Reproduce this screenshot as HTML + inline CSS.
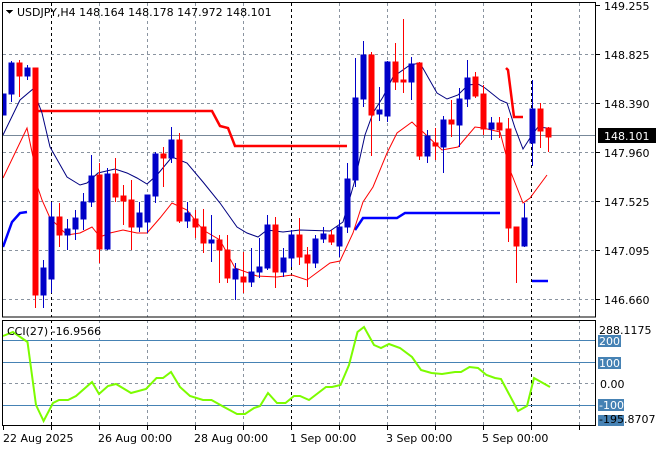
<!DOCTYPE html>
<html><head><meta charset="utf-8"><style>
html,body{margin:0;padding:0;background:#fff;}
svg{display:block;font-family:"DejaVu Sans","Liberation Sans",sans-serif;}
</style></head><body>
<svg width="660" height="450" viewBox="0 0 660 450" xmlns="http://www.w3.org/2000/svg" shape-rendering="crispEdges">
<rect width="660" height="450" fill="#fff"/>
<!-- main grid -->
<g stroke="#8a94a0" stroke-dasharray="3,3" stroke-width="1">
<line x1="3" y1="54.5" x2="596" y2="54.5"/><line x1="3" y1="103.5" x2="596" y2="103.5"/><line x1="3" y1="152.5" x2="596" y2="152.5"/><line x1="3" y1="201.5" x2="596" y2="201.5"/><line x1="3" y1="250.5" x2="596" y2="250.5"/><line x1="3" y1="299.5" x2="596" y2="299.5"/>
<line x1="99.5" y1="3" x2="99.5" y2="317"/><line x1="147.5" y1="3" x2="147.5" y2="317"/><line x1="195.5" y1="3" x2="195.5" y2="317"/><line x1="243.5" y1="3" x2="243.5" y2="317"/><line x1="339.5" y1="3" x2="339.5" y2="317"/><line x1="387.5" y1="3" x2="387.5" y2="317"/><line x1="435.5" y1="3" x2="435.5" y2="317"/><line x1="483.5" y1="3" x2="483.5" y2="317"/><line x1="579.5" y1="3" x2="579.5" y2="317"/>
</g>
<g stroke="#000" stroke-dasharray="3,3">
<line x1="51.5" y1="3" x2="51.5" y2="317"/><line x1="291.5" y1="3" x2="291.5" y2="317"/><line x1="531.5" y1="3" x2="531.5" y2="317"/>
</g>
<line x1="3" y1="135.5" x2="596" y2="135.5" stroke="#778899"/>
<!-- thick lines -->
<g fill="none" stroke-width="2.5" shape-rendering="auto">
<polyline stroke="#ff0000" points="37,111 212,111 220,126 228,128 235,146 347,146"/>
<polyline stroke="#ff0000" points="506,68 508,70 514,117 523,117"/>
<polyline stroke="#0000ff" points="3,247 12,222 20,213 27,212"/>
<polyline stroke="#0000ff" points="355,230 363,218 397,218 405,213 500,213"/>
<polyline stroke="#0000ff" points="532,281 548,281"/>
</g>
<g fill="none" stroke-width="1" shape-rendering="auto">
<polyline stroke="#000080" points="3,135 20,100 33,89 42,113 50,147 67,177 80,185 87,183 98,173 115,169 127,173 137,178 147,184 157,175 172,157 187,163 203,182 220,203 237,227 247,233 258,237 267,230 283,232 300,230 330,231 343,222 355,180 365,135 373,113 383,97 393,77 410,65 420,63 437,93 447,99 458,95 468,85 478,84 485,88 500,100 507,103 515,128 523,149 530,138 538,127 547,128"/>
<polyline stroke="#ff0000" points="3,178 27,128 33,157 37,185 42,200 50,218 67,235 80,233 92,227 100,237 110,233 123,230 137,233 147,233 160,218 172,203 187,210 203,230 220,240 235,268 257,276 277,277 292,275 307,280 330,263 340,261 353,233 363,202 373,187 387,153 397,133 412,122 418,128 423,132 442,150 458,147 475,127 483,128 500,132 510,170 523,203 530,198 547,175"/>
</g>
<!-- candles -->
<g id="c">
<g fill="#0000c8" stroke="#0000c8">
<rect x="3" y="94" width="3" height="21"/>
<line x1="11.5" y1="61" x2="11.5" y2="102"/><rect x="9" y="63" width="5" height="31"/>
<line x1="27.5" y1="65" x2="27.5" y2="80"/><rect x="25" y="68" width="5" height="8"/>
<line x1="43.5" y1="260" x2="43.5" y2="308"/><rect x="41" y="268" width="5" height="27"/>
<line x1="51.5" y1="202" x2="51.5" y2="293"/><rect x="49" y="217" width="5" height="62"/>
<line x1="67.5" y1="219" x2="67.5" y2="250"/><rect x="65" y="229" width="5" height="6"/>
<line x1="75.5" y1="210" x2="75.5" y2="240"/><rect x="73" y="218" width="5" height="11"/>
<line x1="83.5" y1="193" x2="83.5" y2="230"/><rect x="81" y="202" width="5" height="17"/>
<line x1="91.5" y1="155" x2="91.5" y2="207"/><rect x="89" y="176" width="5" height="26"/>
<line x1="107.5" y1="168" x2="107.5" y2="250"/><rect x="105" y="174" width="5" height="75"/>
<line x1="139.5" y1="202" x2="139.5" y2="232"/><rect x="137" y="213" width="5" height="14"/>
<line x1="147.5" y1="195" x2="147.5" y2="233"/><rect x="145" y="195" width="5" height="27"/>
<line x1="155.5" y1="152" x2="155.5" y2="203"/><rect x="153" y="154" width="5" height="42"/>
<line x1="171.5" y1="127" x2="171.5" y2="163"/><rect x="169" y="140" width="5" height="18"/>
<line x1="187.5" y1="202" x2="187.5" y2="228"/><rect x="185" y="213" width="5" height="8"/>
<line x1="211.5" y1="215" x2="211.5" y2="262"/><rect x="209" y="240" width="5" height="3"/>
<line x1="235.5" y1="263" x2="235.5" y2="300"/><rect x="233" y="269" width="5" height="10"/>
<line x1="251.5" y1="248" x2="251.5" y2="287"/><rect x="249" y="272" width="5" height="10"/>
<line x1="259.5" y1="238" x2="259.5" y2="278"/><rect x="257" y="267" width="5" height="5"/>
<line x1="267.5" y1="215" x2="267.5" y2="270"/><rect x="265" y="225" width="5" height="43"/>
<line x1="283.5" y1="248" x2="283.5" y2="277"/><rect x="281" y="258" width="5" height="14"/>
<line x1="291.5" y1="230" x2="291.5" y2="267"/><rect x="289" y="235" width="5" height="23"/>
<line x1="315.5" y1="235" x2="315.5" y2="268"/><rect x="313" y="239" width="5" height="24"/>
<line x1="323.5" y1="227" x2="323.5" y2="243"/><rect x="321" y="234" width="5" height="5"/>
<line x1="339.5" y1="220" x2="339.5" y2="257"/><rect x="337" y="227" width="5" height="19"/>
<line x1="347.5" y1="163" x2="347.5" y2="233"/><rect x="345" y="179" width="5" height="48"/>
<line x1="355.5" y1="58" x2="355.5" y2="187"/><rect x="353" y="98" width="5" height="82"/>
<line x1="363.5" y1="41" x2="363.5" y2="107"/><rect x="361" y="55" width="5" height="44"/>
<line x1="379.5" y1="87" x2="379.5" y2="121"/><rect x="377" y="110" width="5" height="4"/>
<line x1="387.5" y1="61" x2="387.5" y2="122"/><rect x="385" y="62" width="5" height="54"/>
<line x1="411.5" y1="57" x2="411.5" y2="100"/><rect x="409" y="64" width="5" height="18"/>
<line x1="427.5" y1="130" x2="427.5" y2="163"/><rect x="425" y="136" width="5" height="20"/>
<line x1="443.5" y1="116" x2="443.5" y2="173"/><rect x="441" y="120" width="5" height="27"/>
<line x1="459.5" y1="88" x2="459.5" y2="147"/><rect x="457" y="99" width="5" height="26"/>
<line x1="467.5" y1="60" x2="467.5" y2="107"/><rect x="465" y="78" width="5" height="21"/>
<line x1="491.5" y1="117" x2="491.5" y2="140"/><rect x="489" y="123" width="5" height="6"/>
<line x1="524.5" y1="203" x2="524.5" y2="247"/><rect x="522" y="218" width="5" height="28"/>
<line x1="532.5" y1="80" x2="532.5" y2="166"/><rect x="530" y="109" width="5" height="34"/>
</g>
<g fill="#ff0000" stroke="#ff0000">
<line x1="19.5" y1="60" x2="19.5" y2="97"/><rect x="17" y="63" width="5" height="13"/>
<line x1="35.5" y1="68" x2="35.5" y2="308"/><rect x="33" y="68" width="5" height="227"/>
<line x1="59.5" y1="203" x2="59.5" y2="247"/><rect x="57" y="217" width="5" height="18"/>
<line x1="99.5" y1="163" x2="99.5" y2="263"/><rect x="97" y="175" width="5" height="74"/>
<line x1="115.5" y1="158" x2="115.5" y2="202"/><rect x="113" y="174" width="5" height="23"/>
<line x1="123.5" y1="185" x2="123.5" y2="225"/><rect x="121" y="196" width="5" height="5"/>
<line x1="131.5" y1="180" x2="131.5" y2="250"/><rect x="129" y="200" width="5" height="27"/>
<line x1="163.5" y1="147" x2="163.5" y2="187"/><rect x="161" y="154" width="5" height="4"/>
<line x1="179.5" y1="133" x2="179.5" y2="223"/><rect x="177" y="140" width="5" height="81"/>
<line x1="195.5" y1="210" x2="195.5" y2="238"/><rect x="193" y="219" width="5" height="8"/>
<line x1="203.5" y1="209" x2="203.5" y2="253"/><rect x="201" y="227" width="5" height="16"/>
<line x1="219.5" y1="235" x2="219.5" y2="283"/><rect x="217" y="240" width="5" height="10"/>
<line x1="227.5" y1="235" x2="227.5" y2="283"/><rect x="225" y="250" width="5" height="28"/>
<line x1="243.5" y1="252" x2="243.5" y2="293"/><rect x="241" y="277" width="5" height="5"/>
<line x1="275.5" y1="217" x2="275.5" y2="288"/><rect x="273" y="225" width="5" height="47"/>
<line x1="299.5" y1="218" x2="299.5" y2="265"/><rect x="297" y="235" width="5" height="22"/>
<line x1="307.5" y1="247" x2="307.5" y2="287"/><rect x="305" y="255" width="5" height="8"/>
<line x1="331.5" y1="230" x2="331.5" y2="245"/><rect x="329" y="235" width="5" height="7"/>
<line x1="371.5" y1="52" x2="371.5" y2="156"/><rect x="369" y="55" width="5" height="60"/>
<line x1="395.5" y1="43" x2="395.5" y2="90"/><rect x="393" y="62" width="5" height="20"/>
<line x1="403.5" y1="19" x2="403.5" y2="93"/><rect x="401" y="80" width="5" height="2"/>
<line x1="419.5" y1="62" x2="419.5" y2="160"/><rect x="417" y="63" width="5" height="93"/>
<line x1="435.5" y1="128" x2="435.5" y2="160"/><rect x="433" y="143" width="5" height="3"/>
<line x1="451.5" y1="100" x2="451.5" y2="137"/><rect x="449" y="120" width="5" height="4"/>
<line x1="475.5" y1="72" x2="475.5" y2="98"/><rect x="473" y="77" width="5" height="19"/>
<line x1="483.5" y1="85" x2="483.5" y2="135"/><rect x="481" y="94" width="5" height="35"/>
<line x1="499.5" y1="117" x2="499.5" y2="138"/><rect x="497" y="123" width="5" height="7"/>
<line x1="508.5" y1="118" x2="508.5" y2="242"/><rect x="506" y="129" width="5" height="99"/>
<line x1="516.5" y1="227" x2="516.5" y2="283"/><rect x="514" y="227" width="5" height="19"/>
<line x1="540.5" y1="103" x2="540.5" y2="148"/><rect x="538" y="109" width="5" height="22"/>
<line x1="548.5" y1="127" x2="548.5" y2="152"/><rect x="546" y="128" width="5" height="9"/>
</g>
</g>
<!-- main border -->
<rect x="2.5" y="2.5" width="593" height="314.5" fill="none" stroke="#000"/>
<g stroke="#000"><line x1="596" y1="5.5" x2="600" y2="5.5"/><line x1="596" y1="54.5" x2="600" y2="54.5"/><line x1="596" y1="103.5" x2="600" y2="103.5"/><line x1="596" y1="152.5" x2="600" y2="152.5"/><line x1="596" y1="201.5" x2="600" y2="201.5"/><line x1="596" y1="250.5" x2="600" y2="250.5"/><line x1="596" y1="299.5" x2="600" y2="299.5"/></g>
<g font-size="11" fill="#000">
<text x="604" y="10">149.255</text><text x="604" y="59">148.825</text><text x="604" y="108">148.390</text><text x="604" y="157">147.960</text><text x="604" y="206">147.525</text><text x="604" y="255">147.095</text><text x="604" y="304">146.660</text>
</g>
<rect x="598" y="128" width="58" height="15" fill="#000"/>
<text x="604" y="140" font-size="11" fill="#fff">148.101</text>
<polygon points="6,10 13,10 9.5,14" fill="#000"/>
<text x="17" y="16" font-size="11" fill="#000">USDJPY,H4  148.164 148.178 147.972 148.101</text>
<!-- indicator -->
<g stroke="#8a94a0" stroke-dasharray="3,3">
<line x1="3" y1="383.5" x2="596" y2="383.5"/>
<line x1="99.5" y1="320" x2="99.5" y2="425"/><line x1="147.5" y1="320" x2="147.5" y2="425"/><line x1="195.5" y1="320" x2="195.5" y2="425"/><line x1="243.5" y1="320" x2="243.5" y2="425"/><line x1="339.5" y1="320" x2="339.5" y2="425"/><line x1="387.5" y1="320" x2="387.5" y2="425"/><line x1="435.5" y1="320" x2="435.5" y2="425"/><line x1="483.5" y1="320" x2="483.5" y2="425"/><line x1="579.5" y1="320" x2="579.5" y2="425"/>
</g>
<g stroke="#000" stroke-dasharray="3,3"><line x1="51.5" y1="320" x2="51.5" y2="425"/><line x1="291.5" y1="320" x2="291.5" y2="425"/><line x1="531.5" y1="320" x2="531.5" y2="425"/></g>
<g stroke="#4682b4"><line x1="3" y1="340.5" x2="596" y2="340.5"/><line x1="3" y1="362.5" x2="596" y2="362.5"/><line x1="3" y1="405.5" x2="596" y2="405.5"/></g>
<polyline fill="none" stroke="#7cfc00" stroke-width="2" shape-rendering="auto" points="3,336 13,332 27.5,342 36,405 43.6,421 53,403 59,400 68,400 76,396 92,382 99,394 108,386 116,384 131,393 146,389 156.5,378 163,378 171,372 180,387 190,396 203,400 211.5,400 224,407 237,414 245,414 254,408 260,406 268,393 277,403 285.5,403 294,396 300,396 309,400 326,387 332,387 340.5,385 349,365 357.5,332 364,327 374,345 381,348 389,344 400,348 412,357 421,370 431.5,373 442,374 455,372 461,372 469.5,367 478,368 486.5,375 495,378 501,379 518,411 527,406 534,378 550,387"/>
<text x="7" y="335" font-size="11" fill="#000">CCI(27) -16.9566</text>
<rect x="2.5" y="320.5" width="593" height="105" fill="none" stroke="#000"/>
<rect x="598" y="335" width="23" height="12" fill="#4682b4"/>
<rect x="598" y="357" width="23" height="12" fill="#4682b4"/>
<rect x="598" y="399" width="26" height="12" fill="#4682b4"/>
<rect x="598" y="415" width="26" height="11" fill="#4682b4"/>
<g font-size="11">
<text x="599" y="334" fill="#000">288.1175</text>
<text x="599" y="345" fill="#fff">200</text>
<text x="599" y="367" fill="#fff">100</text>
<text x="600" y="388" fill="#000">0.00</text>
<text x="599" y="409" fill="#fff">-100</text>
<text x="599" y="423" fill="#000">-195.8707</text>
</g>
<g stroke="#000"><line x1="3.5" y1="426" x2="3.5" y2="430"/><line x1="51.5" y1="426" x2="51.5" y2="430"/><line x1="99.5" y1="426" x2="99.5" y2="430"/><line x1="147.5" y1="426" x2="147.5" y2="430"/><line x1="195.5" y1="426" x2="195.5" y2="430"/><line x1="243.5" y1="426" x2="243.5" y2="430"/><line x1="291.5" y1="426" x2="291.5" y2="430"/><line x1="339.5" y1="426" x2="339.5" y2="430"/><line x1="387.5" y1="426" x2="387.5" y2="430"/><line x1="435.5" y1="426" x2="435.5" y2="430"/><line x1="483.5" y1="426" x2="483.5" y2="430"/><line x1="531.5" y1="426" x2="531.5" y2="430"/><line x1="579.5" y1="426" x2="579.5" y2="430"/></g>
<g font-size="11" fill="#000">
<text x="3" y="442">22 Aug 2025</text><text x="98" y="442">26 Aug 00:00</text><text x="194" y="442">28 Aug 00:00</text><text x="290" y="442">1 Sep 00:00</text><text x="386" y="442">3 Sep 00:00</text><text x="482" y="442">5 Sep 00:00</text>
</g>
</svg>
</body></html>
